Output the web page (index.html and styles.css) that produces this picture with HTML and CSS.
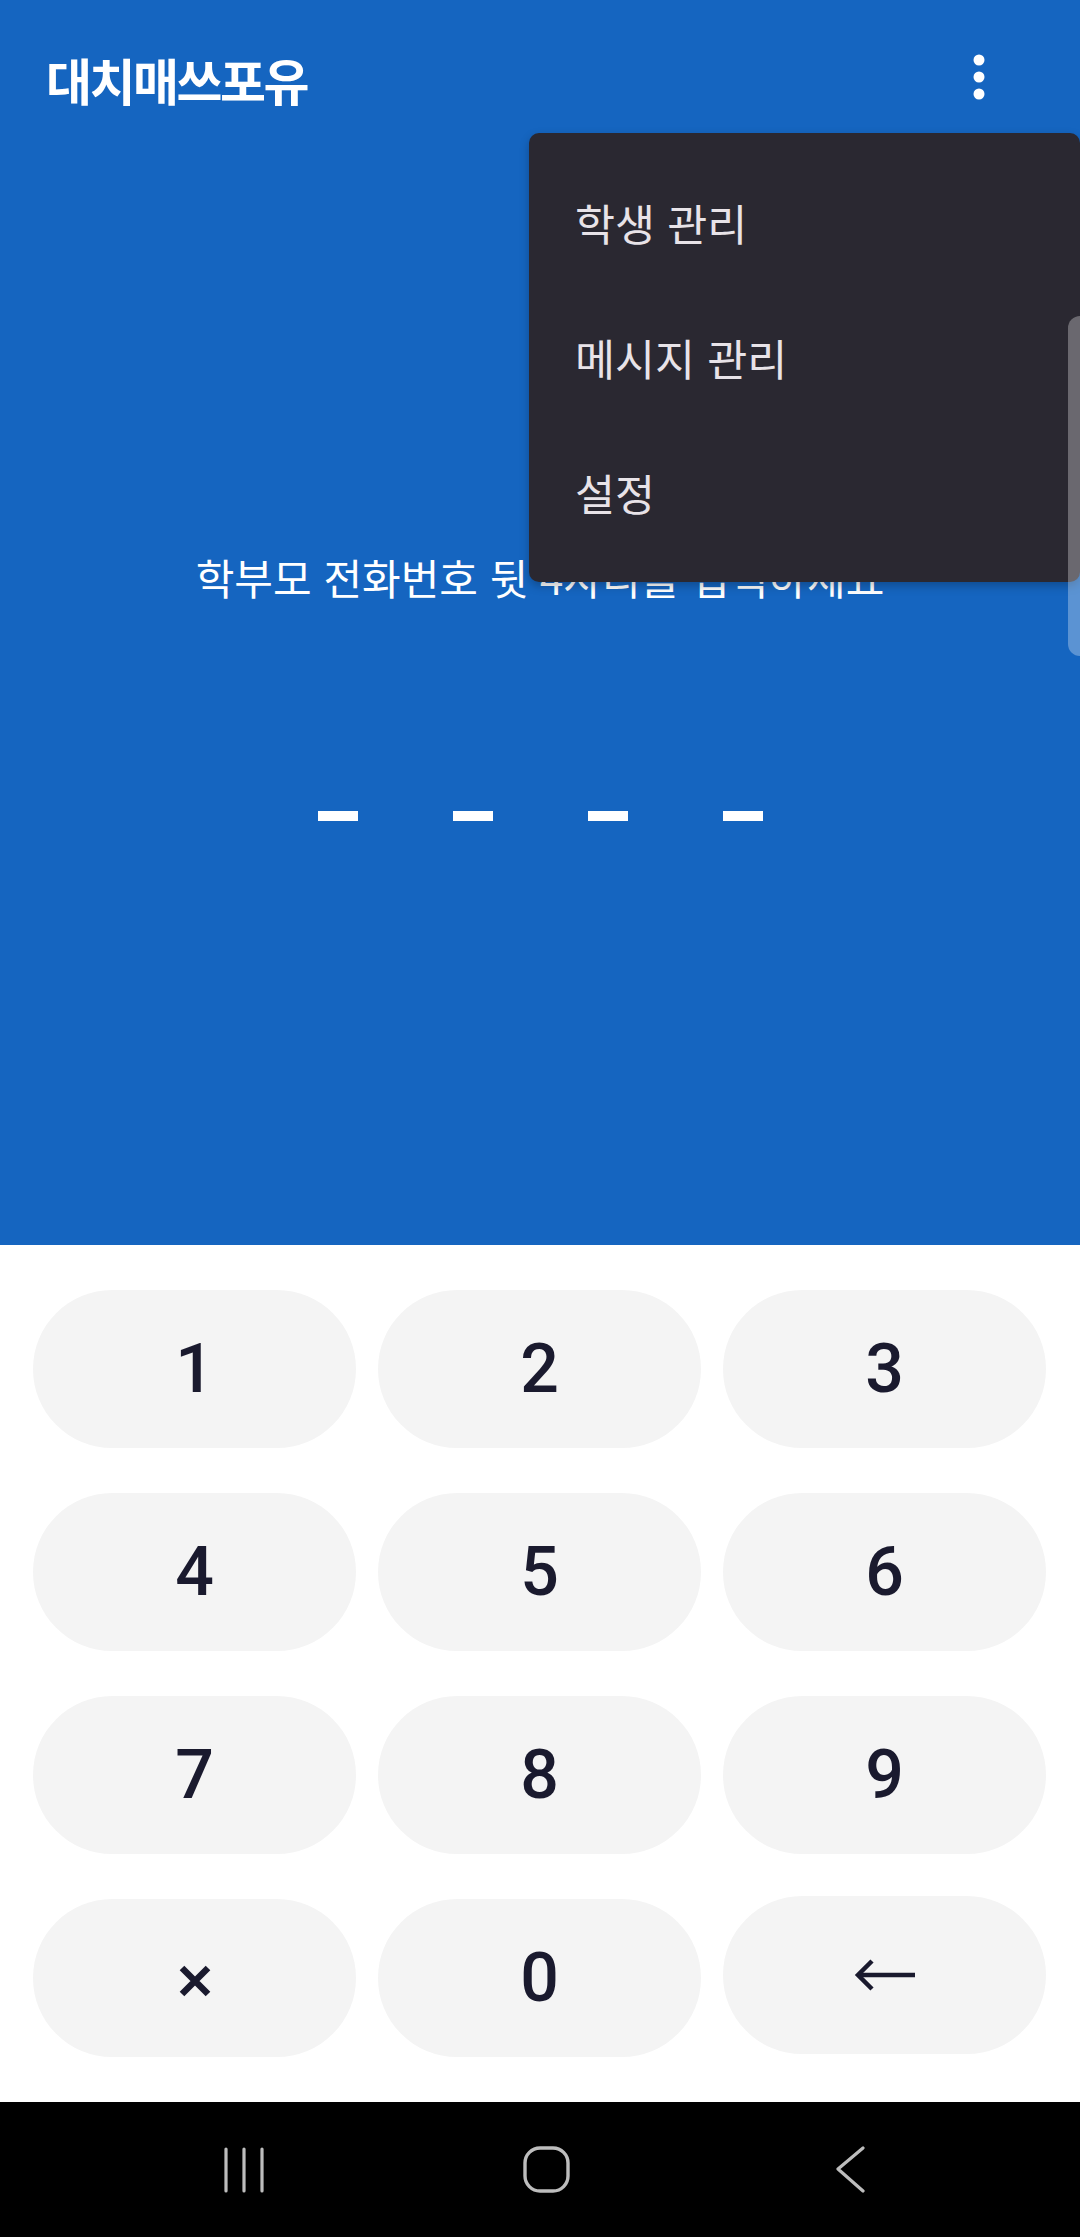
FILE: index.html
```html
<!DOCTYPE html>
<html lang="ko">
<head>
    <meta charset="UTF-8" />
    <meta name="viewport" content="width=1080, height=2237" />
    <title>대치매쓰포유</title>
    <link rel="stylesheet" href="styles.css">
</head>
<body>
    <div class="screen">
        <div class="top">
            <div class="appbar">
                <h1 class="title">대치매쓰포유</h1>
                <svg class="kebab" width="12" height="46" viewBox="0 0 12 46">
                    <circle cx="6" cy="6" r="5.5" fill="#fff" />
                    <circle cx="6" cy="23" r="5.5" fill="#fff" />
                    <circle cx="6" cy="40" r="5.5" fill="#fff" />
                </svg>
            </div>

            <div class="prompt">
                <p class="hint">학부모 전화번호 뒷 4자리를 입력하세요</p>
                <div class="dashes">
                    <span class="dash"></span>
                    <span class="dash"></span>
                    <span class="dash"></span>
                    <span class="dash"></span>
                </div>
            </div>
        </div>

        <div class="keypad">
            <button class="key">1</button>
            <button class="key">2</button>
            <button class="key">3</button>
            <button class="key">4</button>
            <button class="key">5</button>
            <button class="key">6</button>
            <button class="key">7</button>
            <button class="key">8</button>
            <button class="key">9</button>
            <button class="key key-clear" aria-label="×">
                <svg width="32" height="32" viewBox="0 0 32 32">
                    <path d="M3 3 L29 29 M29 3 L3 29" stroke="#1a1a2e" stroke-width="6.5" />
                </svg>
            </button>
            <button class="key">0</button>
            <button class="key key-back" aria-label="←">
                <svg width="62" height="32" viewBox="0 0 62 32">
                    <path d="M4 16 H61" stroke="#1a1a2e" stroke-width="4.5" />
                    <path d="M18 2 L4 16 L18 30" fill="none" stroke="#1a1a2e" stroke-width="4.5" />
                </svg>
            </button>
        </div>

        <div class="navbar">
            <div class="nav-slot">
                <svg width="42" height="46" viewBox="0 0 42 46">
                    <path d="M3 2 V44 M21 2 V44 M39 2 V44" stroke="#bdbdbd" stroke-width="3.2" stroke-linecap="round" />
                </svg>
            </div>
            <div class="nav-slot">
                <svg width="48" height="48" viewBox="0 0 48 48">
                    <rect x="2" y="2" width="43" height="43" rx="15" fill="none" stroke="#bdbdbd" stroke-width="3.4" />
                </svg>
            </div>
            <div class="nav-slot">
                <svg width="32" height="48" viewBox="0 0 32 48">
                    <path d="M29 2 L4 23 L29 45" fill="none" stroke="#bdbdbd" stroke-width="3.2" stroke-linecap="round" stroke-linejoin="round" />
                </svg>
            </div>
        </div>

        <div class="menu">
            <div class="menu-item">학생 관리</div>
            <div class="menu-item">메시지 관리</div>
            <div class="menu-item">설정</div>
        </div>

        <div class="edge-handle"></div>
    </div>
</body>
</html>
```

FILE: styles.css
```css
:root {
    --blue: #1565c0;
    --menu-bg: #2a2831;
    --menu-text: #e8e3e8;
    --key-bg: #f4f4f4;
    --key-text: #1a1a2e;
}

* {
    box-sizing: border-box;
}

body {
    margin: 0;
    background: #ffffff;
    font-family: 'Noto Sans CJK KR', 'Noto Sans', sans-serif;
}

.screen {
    position: relative;
    width: 1080px;
    height: 2237px;
    display: flex;
    flex-direction: column;
    overflow: hidden;
}

.top {
    background-color: var(--blue);
    height: 1245px;
    color: #ffffff;
}

.appbar {
    height: 157px;
    display: flex;
    justify-content: space-between;
    align-items: center;
    padding-left: 46px;
    padding-right: 95px;
}

.title {
    margin: 0;
    font-size: 50px;
    font-weight: 700;
    letter-spacing: -2.5px;
    line-height: 1;
}

.kebab {
    display: block;
    margin-bottom: 4px;
}

.prompt {
    display: flex;
    flex-direction: column;
    align-items: center;
    padding-top: 396px;
}

.hint {
    margin: 0;
    font-size: 42px;
    line-height: 48px;
    font-weight: 400;
}

.dashes {
    display: flex;
    gap: 95px;
    margin-top: 210px;
}

.dash {
    width: 40px;
    height: 10px;
    background: #ffffff;
}

.keypad {
    height: 857px;
    display: grid;
    grid-template-columns: repeat(3, 323px);
    grid-auto-rows: 158px;
    column-gap: 22px;
    row-gap: 45px;
    padding: 45px 34px 45px 33px;
}

.key {
    border: none;
    border-radius: 79px;
    background: var(--key-bg);
    color: var(--key-text);
    font-family: Roboto, 'Noto Sans', sans-serif;
    font-size: 68px;
    font-weight: 500;
    display: flex;
    align-items: center;
    justify-content: center;
    padding: 0;
}

.key svg {
    display: block;
}

.key-clear svg {
    margin-top: 6px;
}

.key-back {
    margin-top: -3px;
    margin-bottom: 3px;
}

.navbar {
    height: 135px;
    background: #000000;
    display: flex;
    justify-content: center;
    align-items: center;
    padding-left: 14px;
}

.nav-slot {
    width: 303px;
    display: flex;
    justify-content: center;
    align-items: center;
}

.nav-slot svg {
    display: block;
}

.menu {
    position: absolute;
    top: 133px;
    right: 0;
    width: 551px;
    padding: 22px 0;
    background: var(--menu-bg);
    border-radius: 10px;
    box-shadow: 0 4px 10px rgba(0, 0, 0, 0.25);
}

.menu-item {
    height: 135px;
    display: flex;
    align-items: center;
    padding-left: 46px;
    font-size: 43.5px;
    color: var(--menu-text);
}

.edge-handle {
    position: absolute;
    top: 316px;
    right: 0;
    width: 12px;
    height: 340px;
    background: rgba(255, 255, 255, 0.3);
    border-radius: 12px 0 0 12px;
}
```
